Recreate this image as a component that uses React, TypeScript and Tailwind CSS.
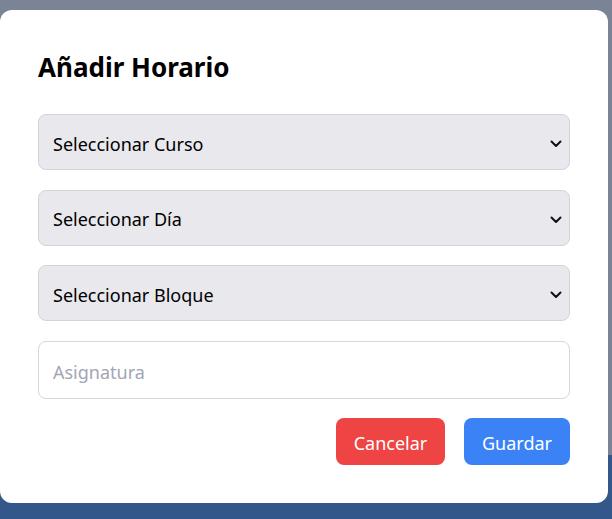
import React from "react";

const font = { fontFamily: '"Noto Sans", "Open Sans", sans-serif' };

function Chevron() {
  return (
    <svg className="pointer-events-none absolute right-[8px] top-[calc(50%+2px)] -translate-y-1/2" width="12" height="8" viewBox="0 0 12 8" fill="none">
      <path d="M1.5 1.5 L6 6 L10.5 1.5" stroke="#111" strokeWidth="2" strokeLinecap="round" strokeLinejoin="round" />
    </svg>
  );
}

function SelectField({ label }: { label: string }) {
  return (
    <div className="relative">
      <select
        defaultValue=""
        className="h-14 w-full appearance-none rounded-lg border border-[#d3d3db] bg-[#e8e8ed] pl-[14px] pr-8 pt-1 text-[18px] text-black outline-none"
        style={font}
      >
        <option value="">{label}</option>
      </select>
      <Chevron />
    </div>
  );
}

export default function App() {
  return (
    <div
      className="h-[519px] w-[612px] overflow-hidden bg-[linear-gradient(to_bottom,#7b8497_0px,#7b8497_455px,#34578a_455px,#34578a_519px)] pt-[10px]"
      style={font}
    >
      <div className="flex h-[493px] w-[608px] flex-col rounded-xl bg-white px-[38px] pt-[40px]">
        <h2 className="text-[26px] font-bold leading-[34px] text-black">Añadir Horario</h2>

        <div className="mt-[30px] flex flex-col gap-[19.5px]">
          <SelectField label="Seleccionar Curso" />
          <SelectField label="Seleccionar Día" />
          <SelectField label="Seleccionar Bloque" />
          <input
            placeholder="Asignatura"
            className="h-[58px] w-full rounded-lg border border-[#d6d6de] bg-white px-[14px] pt-1 text-[18px] text-black outline-none placeholder:text-[#a3a5b5]"
            style={font}
          />
        </div>

        <div className="mt-[19.5px] flex justify-end gap-[19px]">
          <button className="h-[47px] w-[109px] rounded-lg bg-[#ef4444] pt-1 text-[18px] text-white">Cancelar</button>
          <button className="h-[47px] w-[106px] rounded-lg bg-[#3b82f6] pt-1 text-[18px] text-white">Guardar</button>
        </div>
      </div>
    </div>
  );
}
